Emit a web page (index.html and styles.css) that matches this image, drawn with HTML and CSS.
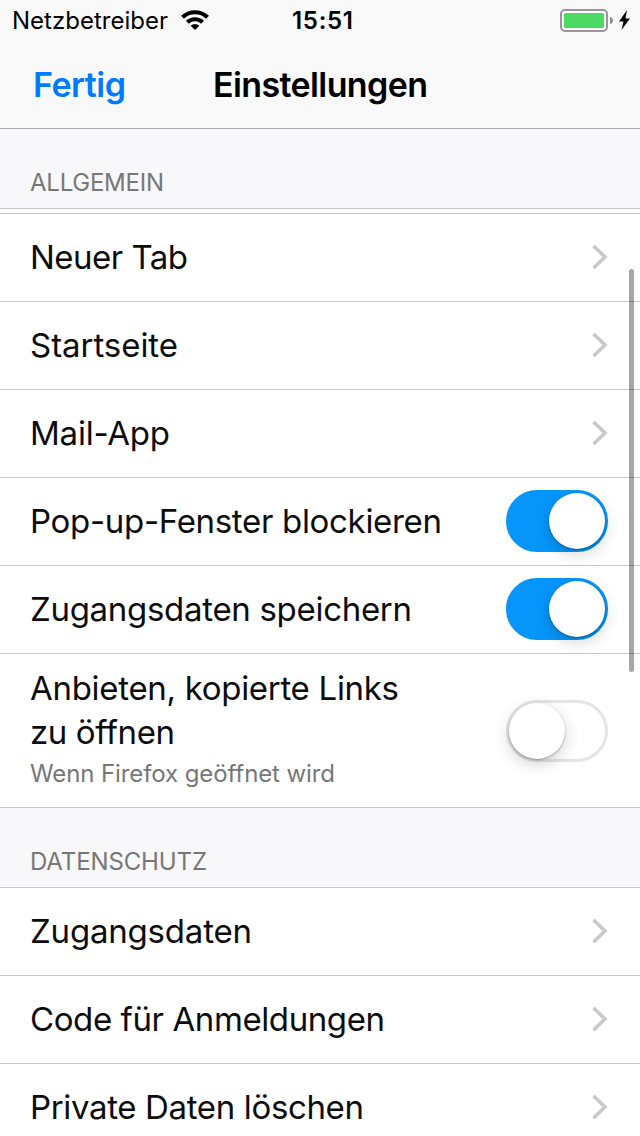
FILE: index.html
```html
<!DOCTYPE html>
<html lang="de">
<head>
<meta charset="utf-8">
<title>Einstellungen</title>
<link rel="stylesheet" href="styles.css">
</head>
<body>
<header class="top">
  <div class="status">
    <div class="carrier"><svg class="label" width="156" height="34"><text x="0" y="29" textLength="156">Netzbetreiber</text></svg>
      <svg class="wifi" width="28" height="21" viewBox="0 0 28 21"><path d="M14 20 9.700 15.700a6.500 6.500 0 0 1 8.600 0Z"/><path class="arc" d="M6.400 12.300a11 11 0 0 1 15.200 0M1.500 7.300a18 18 0 0 1 25 0"/></svg></div>
    <svg class="label clock" width="62" height="34"><text x="0" y="29" textLength="61">15:51</text></svg>
    <svg class="battery" width="72" height="24" viewBox="0 0 72 24"><rect x="1" y="1" width="46" height="21" rx="4" fill="none" stroke="#98969a" stroke-width="2"/><rect x="4" y="4" width="40" height="15" rx="1.5" fill="#4cd964"/><path d="M50 8q3 1 3 3.500t-3 3.500Z" fill="#8b8b8c"/><path d="M67 1 59 12.500h4.500L61.500 21 70 9.500h-4.500Z"/></svg>
  </div>
  <div class="nav"><svg class="done" width="93" height="50"><text x="0" y="35.500" textLength="93">Fertig</text></svg><svg class="title" width="215" height="50"><text x="0" y="35.500" textLength="215">Einstellungen</text></svg></div>
</header>
<main>
  <h2 class="section first"><svg width="134" height="40"><text x="0" y="28" textLength="134">ALLGEMEIN</text></svg></h2>
  <div class="gap"></div>
  <div class="row"><svg class="name" width="158" height="50"><text x="0" y="36" textLength="158">Neuer Tab</text></svg><svg class="chevron" width="18" height="28"><path d="m3.500 3 11.500 11L3.500 25"/></svg></div>
  <div class="row"><svg class="name" width="148" height="50"><text x="0" y="36" textLength="148">Startseite</text></svg><svg class="chevron" width="18" height="28"><path d="m3.500 3 11.500 11L3.500 25"/></svg></div>
  <div class="row"><svg class="name" width="140" height="50"><text x="0" y="36" textLength="140">Mail-App</text></svg><svg class="chevron" width="18" height="28"><path d="m3.500 3 11.500 11L3.500 25"/></svg></div>
  <div class="row"><svg class="name" width="412" height="50"><text x="0" y="36" textLength="412">Pop-up-Fenster blockieren</text></svg><span class="switch on"><i></i></span></div>
  <div class="row"><svg class="name" width="382" height="50"><text x="0" y="36" textLength="382">Zugangsdaten speichern</text></svg><span class="switch on"><i></i></span></div>
  <div class="row tall"><svg class="name" width="370" height="152"><text x="0" y="45" textLength="369">Anbieten, kopierte Links</text><text x="0" y="89" textLength="145">zu öffnen</text><text class="sub" x="0" y="127" textLength="305">Wenn Firefox geöffnet wird</text></svg><span class="switch"><i></i></span></div>
  <h2 class="section"><svg width="177" height="40"><text x="0" y="28" textLength="177">DATENSCHUTZ</text></svg></h2>
  <div class="row"><svg class="name" width="222" height="50"><text x="0" y="36" textLength="222">Zugangsdaten</text></svg><svg class="chevron" width="18" height="28"><path d="m3.500 3 11.500 11L3.500 25"/></svg></div>
  <div class="row"><svg class="name" width="355" height="50"><text x="0" y="36" textLength="355">Code für Anmeldungen</text></svg><svg class="chevron" width="18" height="28"><path d="m3.500 3 11.500 11L3.500 25"/></svg></div>
  <div class="row"><svg class="name" width="334" height="50"><text x="0" y="36" textLength="334">Private Daten löschen</text></svg><svg class="chevron" width="18" height="28"><path d="m3.500 3 11.500 11L3.500 25"/></svg></div>
</main>
<div class="scrollbar"></div>
</body>
</html>
```
FILE: styles.css
```css
* { box-sizing: border-box; }
body { margin: 0; width: 640px; height: 1136px; overflow: hidden; position: relative; background: #fff; font-family: Inter, sans-serif; color: #000; font-variant-ligatures: none; }
svg { display: block; flex: none; overflow: visible; }
.top { height: 129px; background: #f9f9f9; border-bottom: 1px solid #acacad; }
.status { height: 40px; display: grid; grid-template-columns: 1fr 62px 1fr; align-items: start; font-size: 24px; }
.carrier { display: flex; gap: 13px; padding-left: 12px; }
.wifi { margin-top: 10px; }
.arc { fill: none; stroke: #000; stroke-width: 4.2; }
.clock { font-weight: 600; margin-left: 3px; }
.battery { justify-self: end; margin: 9px 8px 0 0; }
.nav { display: flex; padding: 21px 0 0 33px; gap: 87px; font-size: 34px; font-weight: 600; }
.done { fill: #007aff; }
.section { margin: 0; height: 80px; padding: 34px 30px 0; background: #f8f8fb; border-bottom: 1px solid #c8c8ca; font-size: 24px; font-weight: 400; fill: #777; }
.gap { height: 5px; border-bottom: 1px solid #c8c8ca; }
.row { height: 88px; padding: 0 32px 0 30px; display: flex; align-items: center; justify-content: space-between; border-bottom: 1px solid #c8c8ca; font-size: 33px; fill: #0c0c0d; }
.tall { height: 154px; }
.sub { font-size: 24px; fill: #777; }
.chevron { fill: none; stroke: #c7c7cc; stroke-width: 3.5; margin-bottom: 1px; }
.switch { width: 102px; height: 62px; border-radius: 31px; border: 3px solid #e5e5e5; display: flex; }
.switch i { width: 56px; height: 56px; border-radius: 50%; background: #fff; box-shadow: 0 1px 2px rgba(0,0,0,.3), 0 5px 16px rgba(0,0,0,.18); }
.on { background: #0696fb; border-color: #0696fb; justify-content: flex-end; margin-bottom: 2px; }
.scrollbar { position: absolute; left: 629px; top: 269px; width: 5px; height: 403px; border-radius: 3px; background: rgba(0,0,0,.35); }
```
